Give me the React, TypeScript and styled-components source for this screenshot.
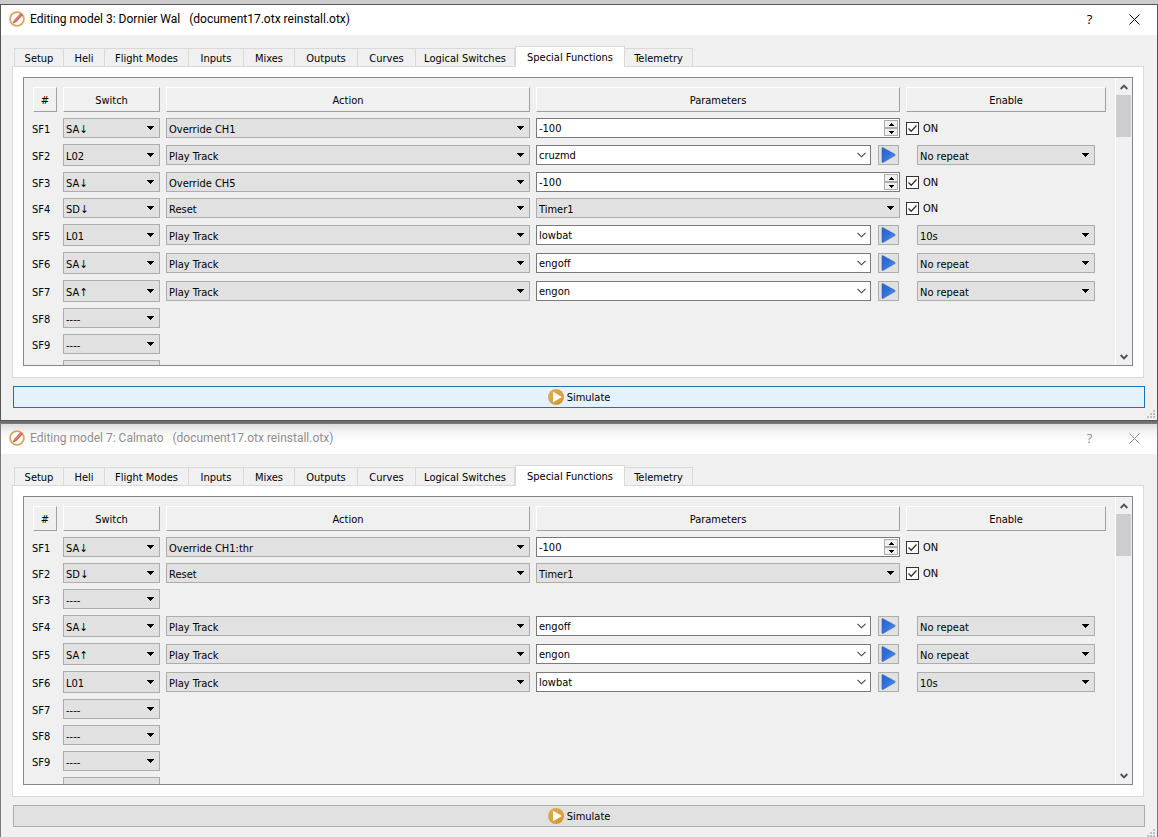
import React, { useId } from "react";
import styled, { createGlobalStyle, css } from "styled-components";

type Repeat = "No repeat" | "10s";

type SpecialFunction =
  | { kind: "override"; sw: string; action: string; value: number }
  | { kind: "track"; sw: string; track: string; repeat: Repeat }
  | { kind: "reset"; sw: string; target: string }
  | { kind: "empty" };

const EMPTY: SpecialFunction = { kind: "empty" };

const dornierWal: SpecialFunction[] = [
  { kind: "override", sw: "SA↓", action: "Override CH1", value: -100 },
  { kind: "track", sw: "L02", track: "cruzmd", repeat: "No repeat" },
  { kind: "override", sw: "SA↓", action: "Override CH5", value: -100 },
  { kind: "reset", sw: "SD↓", target: "Timer1" },
  { kind: "track", sw: "L01", track: "lowbat", repeat: "10s" },
  { kind: "track", sw: "SA↓", track: "engoff", repeat: "No repeat" },
  { kind: "track", sw: "SA↑", track: "engon", repeat: "No repeat" },
  EMPTY,
  EMPTY,
  EMPTY,
];

const calmato: SpecialFunction[] = [
  { kind: "override", sw: "SA↓", action: "Override CH1:thr", value: -100 },
  { kind: "reset", sw: "SD↓", target: "Timer1" },
  EMPTY,
  { kind: "track", sw: "SA↓", track: "engoff", repeat: "No repeat" },
  { kind: "track", sw: "SA↑", track: "engon", repeat: "No repeat" },
  { kind: "track", sw: "L01", track: "lowbat", repeat: "10s" },
  EMPTY,
  EMPTY,
  EMPTY,
  EMPTY,
];

const tabs = [
  { name: "Setup", width: 50 },
  { name: "Heli", width: 41 },
  { name: "Flight Modes", width: 84 },
  { name: "Inputs", width: 55 },
  { name: "Mixes", width: 51 },
  { name: "Outputs", width: 63 },
  { name: "Curves", width: 58 },
  { name: "Logical Switches", width: 99 },
  { name: "Special Functions", width: 110 },
  { name: "Telemetry", width: 68 },
];

const GlobalStyle = createGlobalStyle`
  *, *::before, *::after { box-sizing: border-box; }
  html, body { margin: 0; overflow: hidden; }
  body { background: #6e6e6e; }
  body, button, input, select {
    color: #000;
    font: 11px/14px "DejaVu Sans Condensed", "DejaVu Sans", sans-serif;
  }
`;

const Desktop = styled.main`
  display: flex;
  flex-direction: column;
  gap: 2px;
  border-top: 4px solid #cdcdcd;
`;

const Dialog = styled.section<{ $active: boolean }>`
  position: relative;
  display: flex;
  flex-direction: column;
  padding-bottom: 12px;
  border: 1px solid ${(p) => (p.$active ? "#555" : "#7a7a7a")};
  background: #f0f0f0;
`;

const TitleBar = styled.header<{ $active: boolean }>`
  display: flex;
  align-items: center;
  height: 30px;
  padding: 0 0 2px 8px;
  background: ${(p) =>
    p.$active ? "#fff" : "linear-gradient(#dcdcdc, #f4f4f4 8px, #fff 18px)"};
  color: ${(p) => (p.$active ? "#000" : "#8f8f8f")};
`;

const Title = styled.h1`
  flex: 1;
  margin: 0 0 0 5px;
  font: 12px/16px Roboto, "Open Sans", sans-serif;
  white-space: pre;
`;

const CaptionButton = styled.button`
  display: grid;
  place-items: center;
  width: 45px;
  height: 28px;
  padding: 0;
  border: 0;
  background: transparent;
  color: inherit;
  font: 13px/16px "Open Sans", sans-serif;
`;

const TabBar = styled.div`
  display: flex;
  align-items: flex-end;
  margin: 11px 13px 0;
`;

const Tab = styled.button<{ $width: number; $selected: boolean }>`
  flex: 0 1 ${(p) => p.$width}px;
  height: 18px;
  padding: 2px 0 0;
  border: solid #d9d9d9;
  border-width: 1px 1px 0 0;
  background: #f0f0f0;
  white-space: nowrap;

  &:first-child {
    border-left-width: 1px;
  }

  ${(p) =>
    p.$selected &&
    css`
      z-index: 1;
      height: 21px;
      margin-bottom: -1px;
      padding-top: 1px;
      border-left-width: 1px;
      background: #fff;
    `}
`;

const Pane = styled.div`
  margin: 0 13px 0 11px;
  padding: 10px 10px 11px;
  border: 1px solid #d9d9d9;
  background: #fff;
`;

const ScrollArea = styled.div`
  display: flex;
  height: 289px;
  overflow: hidden;
  border: 1px solid #828790;
  background: #f0f0f0;
`;

const TableView = styled.div`
  flex: 1;
  min-width: 0;
  padding: 3px;
`;

const Table = styled.table`
  width: 100%;
  table-layout: fixed;
  border-collapse: separate;
  border-spacing: 6px;
`;

const Col = styled.col<{ $width: number }>`
  width: ${(p) => p.$width}px;
`;

const HeadCell = styled.th`
  height: 25px;
  padding: 2px 0 0;
  border: 1px solid;
  border-color: #fff #a0a0a0 #a0a0a0 #fff;
  font-weight: normal;
`;

const RowHead = styled.th`
  padding: 3px 0 0;
  font-weight: normal;
  text-align: left;
  text-indent: -1px;
`;

const Cell = styled.td`
  padding: 0;
`;

const Overlay = styled.span`
  display: grid;
  min-width: 0;
  align-items: center;

  > * {
    grid-area: 1 / 1;
  }

  > svg {
    pointer-events: none;
  }
`;

const DropDownBox = styled(Overlay)`
  > svg {
    justify-self: end;
    margin-right: 6px;
  }
`;

const DropDown = styled.select<{ $tall: boolean }>`
  width: 100%;
  height: ${(p) => (p.$tall ? 22 : 20)}px;
  padding: 3px 18px 0 2px;
  border: 1px solid #adadad;
  border-radius: 0;
  background: #e1e1e1;
  appearance: none;
`;

const Field = styled.div`
  display: flex;
  flex: 1;
  height: 20px;
  border: 1px solid #7a7a7a;
  background: #fff;
`;

const TextInput = styled.input`
  flex: 1;
  min-width: 0;
  padding: 2px 2px 0;
  border: 0;
  background: transparent;
  outline: 0;
  appearance: textfield;

  &::-webkit-inner-spin-button {
    display: none;
  }
`;

const Spinner = styled.div`
  display: flex;
  flex-direction: column;
  width: 14px;
  margin: 1px;
`;

const SpinButton = styled.button`
  display: grid;
  flex: 1;
  place-items: center;
  min-height: 0;
  padding: 0;
  border: 1px solid #adadad;
  background: #f0f0f0;
`;

const ChevronButton = styled.button`
  display: grid;
  place-items: center;
  width: 17px;
  padding: 0;
  border: 0;
  background: transparent;
`;

const TrackPicker = styled.div`
  display: flex;
  gap: 7px;
  padding-right: 1px;
`;

const PlayButton = styled.button`
  display: grid;
  place-items: center;
  width: 21px;
  height: 20px;
  padding: 0;
  border: 1px solid #adadad;
  background: #e1e1e1;
`;

const RepeatBox = styled.div`
  padding: 0 11px;
`;

const CheckLabel = styled.label`
  display: flex;
  align-items: center;
  gap: 4px;
`;

const Caption = styled.span`
  padding-top: 2px;
`;

const CheckBox = styled.input`
  width: 13px;
  height: 13px;
  margin: 0;
  border: 1px solid #333;
  background: #fff;
  appearance: none;

  &:not(:checked) + svg {
    display: none;
  }
`;

const ScrollBar = styled.div`
  display: flex;
  flex-direction: column;
  width: 17px;
  border-left: 1px solid #fff;
`;

const ScrollButton = styled.button`
  display: grid;
  place-items: center;
  height: 17px;
  padding: 0;
  border: 0;
  background: transparent;
`;

const ScrollTrack = styled.div`
  flex: 1;
  padding-right: 1px;
`;

const ScrollThumb = styled.div`
  height: 42px;
  background: #cdcdcd;
`;

const SimulateButton = styled.button<{ $active: boolean }>`
  display: flex;
  align-items: center;
  justify-content: center;
  gap: 3px;
  height: 22px;
  margin: 8px 12px 0;
  padding: 0;
  border: 1px solid ${(p) => (p.$active ? "#1874b4" : "#adadad")};
  background: ${(p) => (p.$active ? "#e5f1fb" : "#e1e1e1")};
`;

const SizeGrip = styled.svg`
  position: absolute;
  right: 2px;
  bottom: 2px;
`;

const EditIcon = () => (
  <svg width="16" height="16" viewBox="0 0 16 16" aria-hidden="true">
    <circle cx="8" cy="8" r="6.9" fill="#fff" stroke="#d8a55c" strokeWidth="1.8" />
    <path d="M4.2 12.2l.9-3.2 6.6-7 2.2 2-6.5 7z" fill="#d2605a" />
    <path d="M5.8 10l6.4-6.8" stroke="#f0aaa2" strokeWidth=".7" />
    <path d="M4.2 12.2l.5-1.7 1.2 1z" fill="#6b4038" />
  </svg>
);

const CloseIcon = () => (
  <svg width="11" height="11" viewBox="0 0 11 11" aria-hidden="true">
    <path d="M.5.5l10 10M10.5.5l-10 10" stroke="currentColor" fill="none" />
  </svg>
);

const Triangle = () => (
  <svg width="7" height="4" viewBox="0 0 7 4" shapeRendering="crispEdges" aria-hidden="true">
    <path d="M0 0h7v1H0zM1 1h5v1H1zM2 2h3v1H2zM3 3h1v1H3z" />
  </svg>
);

const SpinArrow = ({ up }: { up?: boolean }) => (
  <svg width="5" height="3" viewBox="0 0 5 3" shapeRendering="crispEdges" aria-hidden="true">
    <path d={up ? "M2 0h1v1H2zM1 1h3v1H1zM0 2h5v1H0z" : "M0 0h5v1H0zM1 1h3v1H1zM2 2h1v1H2z"} />
  </svg>
);

const Chevron = () => (
  <svg width="9" height="6" viewBox="0 0 9 6" aria-hidden="true">
    <path d="M.5.8l4 4 4-4" stroke="#444" strokeWidth="1.1" fill="none" />
  </svg>
);

const ScrollArrow = ({ up }: { up?: boolean }) => (
  <svg width="8" height="6" viewBox="0 0 8 6" aria-hidden="true">
    <path d={up ? "M.7 5L4 1.7 7.3 5" : "M.7 1L4 4.3 7.3 1"} stroke="#505050" strokeWidth="1.9" fill="none" />
  </svg>
);

const CheckMark = () => (
  <svg width="13" height="13" viewBox="0 0 13 13" aria-hidden="true">
    <path d="M2.5 6.5l2.7 2.8 5.3-5.8" stroke="#333" strokeWidth="1.3" fill="none" />
  </svg>
);

const PlayIcon = () => {
  const id = useId();
  return (
    <svg width="15" height="16" viewBox="0 0 15 16" aria-hidden="true">
      <defs>
        <linearGradient id={id} x1="0" y1="0" x2="1" y2="1">
          <stop offset="0" stopColor="#2a63cf" />
          <stop offset=".45" stopColor="#2f6fdc" />
          <stop offset="1" stopColor="#5a9cf2" />
        </linearGradient>
      </defs>
      <path
        d="M1 1.2Q1 .2 2 .7L13.8 7.2Q14.8 8 13.8 8.6L2 15.4Q1 15.8 1 14.8z"
        fill={`url(#${id})`}
        stroke="#2b5fc0"
        strokeWidth=".6"
      />
    </svg>
  );
};

const SimulateIcon = () => {
  const id = useId();
  return (
    <svg width="16" height="16" viewBox="0 0 16 16" aria-hidden="true">
      <defs>
        <linearGradient id={id} x1="0" y1="0" x2="1" y2="1">
          <stop offset="0" stopColor="#e0b256" />
          <stop offset="1" stopColor="#d4922a" />
        </linearGradient>
      </defs>
      <circle cx="8" cy="8" r="8" fill={`url(#${id})`} />
      <path d="M5 2.8L14 8l-9 5.2z" fill="#fff" />
    </svg>
  );
};

const Select = ({ label, value, tall = false }: { label: string; value: string; tall?: boolean }) => (
  <DropDownBox>
    <DropDown $tall={tall} aria-label={label} defaultValue={value}>
      <option>{value}</option>
    </DropDown>
    <Triangle />
  </DropDownBox>
);

const SpinBox = ({ label, value }: { label: string; value: number }) => (
  <Field>
    <TextInput type="number" aria-label={label} defaultValue={value} />
    <Spinner>
      <SpinButton type="button" aria-label="Increase">
        <SpinArrow up />
      </SpinButton>
      <SpinButton type="button" aria-label="Decrease">
        <SpinArrow />
      </SpinButton>
    </Spinner>
  </Field>
);

const TrackField = ({ label, value }: { label: string; value: string }) => (
  <TrackPicker>
    <Field>
      <TextInput type="text" aria-label={label} defaultValue={value} />
      <ChevronButton type="button" aria-label="Choose track">
        <Chevron />
      </ChevronButton>
    </Field>
    <PlayButton type="button" aria-label="Play">
      <PlayIcon />
    </PlayButton>
  </TrackPicker>
);

const EnableBox = () => (
  <CheckLabel>
    <Overlay>
      <CheckBox type="checkbox" defaultChecked />
      <CheckMark />
    </Overlay>
    <Caption>ON</Caption>
  </CheckLabel>
);

const actionOf = (fn: SpecialFunction) => {
  switch (fn.kind) {
    case "override":
      return fn.action;
    case "track":
      return "Play Track";
    case "reset":
      return "Reset";
    default:
      return "";
  }
};

const FunctionRow = ({ name, fn }: { name: string; fn: SpecialFunction }) => (
  <tr>
    <RowHead scope="row">{name}</RowHead>
    <Cell>
      <Select label={`${name} switch`} value={fn.kind === "empty" ? "----" : fn.sw} tall={fn.kind === "track"} />
    </Cell>
    <Cell>{fn.kind !== "empty" && <Select label={`${name} action`} value={actionOf(fn)} />}</Cell>
    <Cell>
      {fn.kind === "override" && <SpinBox label={`${name} value`} value={fn.value} />}
      {fn.kind === "track" && <TrackField label={`${name} track`} value={fn.track} />}
      {fn.kind === "reset" && <Select label={`${name} target`} value={fn.target} />}
    </Cell>
    <Cell>
      {(fn.kind === "override" || fn.kind === "reset") && <EnableBox />}
      {fn.kind === "track" && (
        <RepeatBox>
          <Select label={`${name} repeat`} value={fn.repeat} />
        </RepeatBox>
      )}
    </Cell>
  </tr>
);

const ModelDialog = ({
  title,
  functions,
  active = false,
}: {
  title: string;
  functions: SpecialFunction[];
  active?: boolean;
}) => (
  <Dialog $active={active} aria-label={title}>
    <TitleBar $active={active}>
      <EditIcon />
      <Title>{title}</Title>
      <CaptionButton type="button" aria-label="Help">
        ?
      </CaptionButton>
      <CaptionButton type="button" aria-label="Close">
        <CloseIcon />
      </CaptionButton>
    </TitleBar>
    <TabBar role="tablist">
      {tabs.map((tab) => (
        <Tab
          key={tab.name}
          type="button"
          role="tab"
          aria-selected={tab.name === "Special Functions"}
          $selected={tab.name === "Special Functions"}
          $width={tab.width}
        >
          {tab.name}
        </Tab>
      ))}
    </TabBar>
    <Pane role="tabpanel">
      <ScrollArea>
        <TableView>
          <Table>
            <colgroup>
              <Col $width={24} />
              <Col $width={97} />
              <col />
              <col />
              <Col $width={200} />
            </colgroup>
            <thead>
              <tr>
                {["#", "Switch", "Action", "Parameters", "Enable"].map((heading) => (
                  <HeadCell key={heading} scope="col">
                    {heading}
                  </HeadCell>
                ))}
              </tr>
            </thead>
            <tbody>
              {functions.map((fn, i) => (
                <FunctionRow key={i} name={`SF${i + 1}`} fn={fn} />
              ))}
            </tbody>
          </Table>
        </TableView>
        <ScrollBar>
          <ScrollButton type="button" aria-label="Scroll up">
            <ScrollArrow up />
          </ScrollButton>
          <ScrollTrack>
            <ScrollThumb />
          </ScrollTrack>
          <ScrollButton type="button" aria-label="Scroll down">
            <ScrollArrow />
          </ScrollButton>
        </ScrollBar>
      </ScrollArea>
    </Pane>
    <SimulateButton type="button" $active={active}>
      <SimulateIcon />
      <Caption>Simulate</Caption>
    </SimulateButton>
    <SizeGrip width="8" height="8" viewBox="0 0 8 8" aria-hidden="true">
      <path
        d="M6 0h2v2H6zM3 3h2v2H3zM6 3h2v2H6zM0 6h2v2H0zM3 6h2v2H3zM6 6h2v2H6z"
        fill="#bfbfbf"
      />
    </SizeGrip>
  </Dialog>
);

export default function App() {
  return (
    <>
      <GlobalStyle />
      <Desktop>
        <ModelDialog active title="Editing model 3: Dornier Wal   (document17.otx reinstall.otx)" functions={dornierWal} />
        <ModelDialog title="Editing model 7: Calmato   (document17.otx reinstall.otx)" functions={calmato} />
      </Desktop>
    </>
  );
}
